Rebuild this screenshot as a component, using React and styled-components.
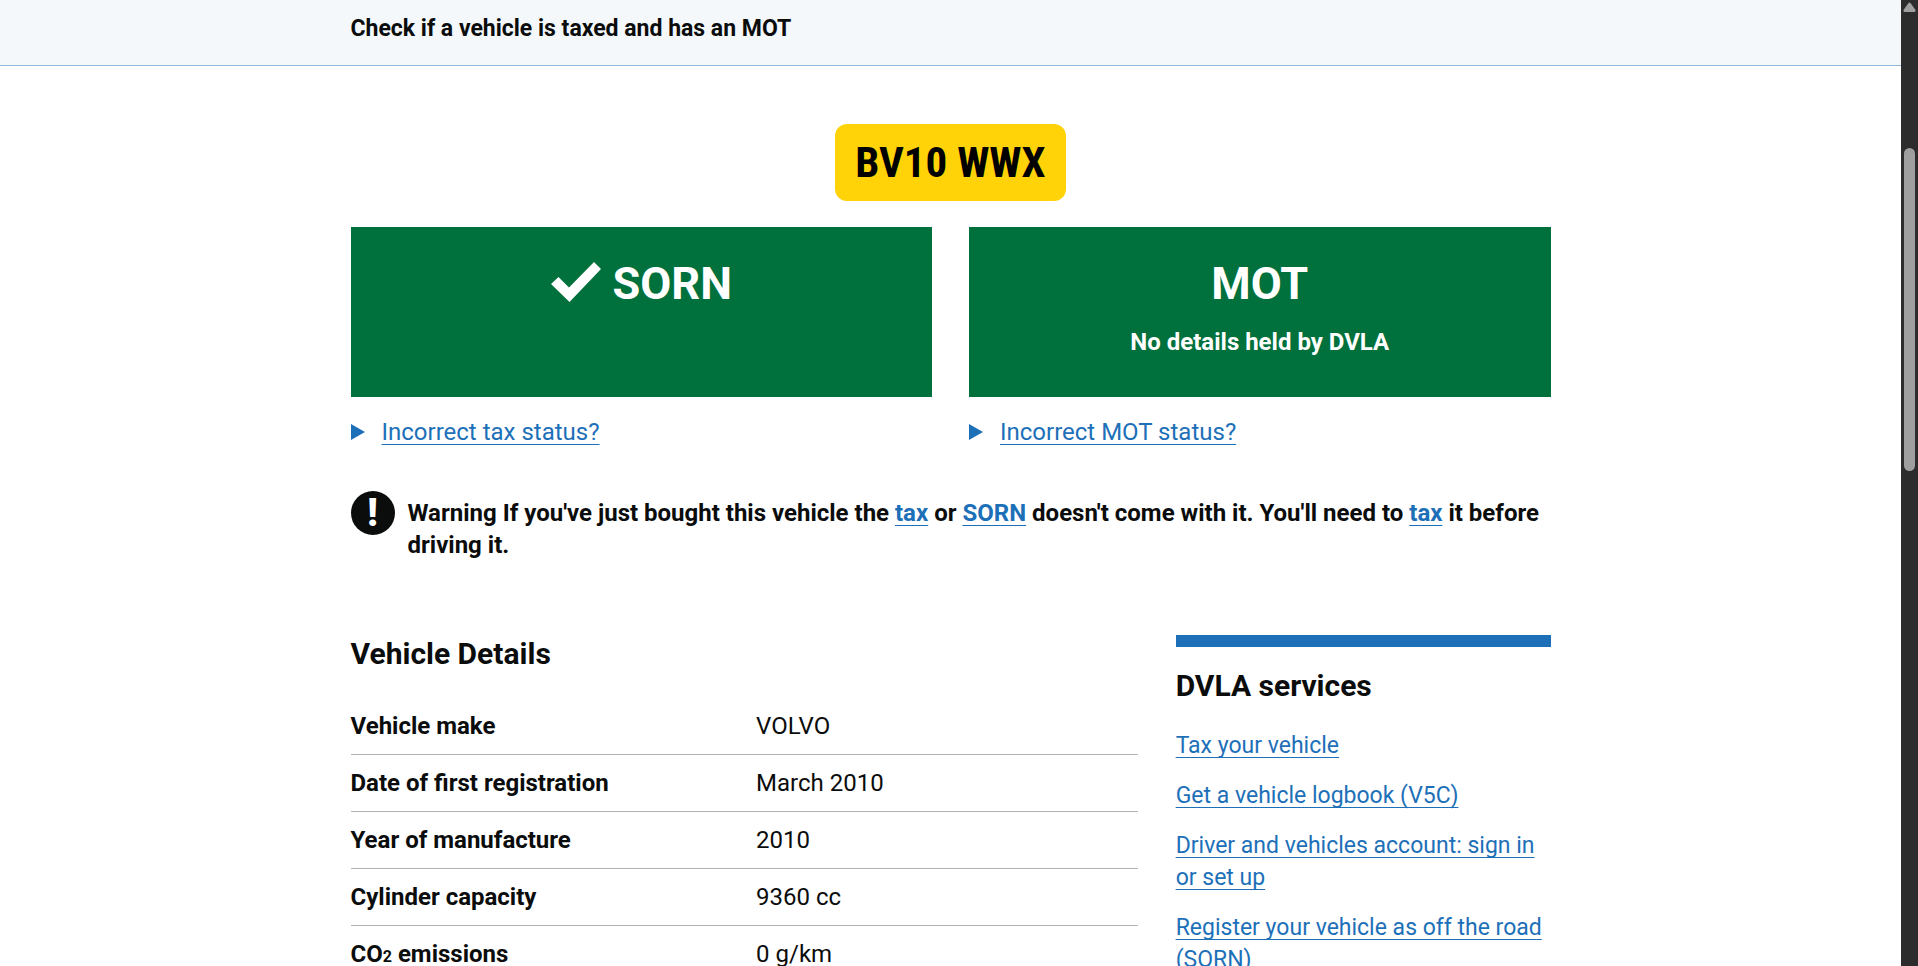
import React from 'react';
import styled, { createGlobalStyle, ThemeProvider } from 'styled-components';

const theme = {
  colors: {
    text: '#0b0c0c',
    link: '#1d70b8',
    green: '#00703c',
    border: '#b1b4b6',
    plate: '#ffd307',
    white: '#ffffff',
    banner: '#f4f8fb',
    bannerBorder: '#8eb8dc',
    track: '#2c2c2c',
    thumb: '#9f9f9f',
  },
  fontSize: {
    xs: '23px',
    s: '24px',
    m: '30px',
    l: '45px',
  },
};

const GlobalStyle = createGlobalStyle`
  * {
    box-sizing: border-box;
  }
  body {
    margin: 0;
    background: ${({ theme }) => theme.colors.white};
    color: ${({ theme }) => theme.colors.text};
    font-family: Roboto, Arial, sans-serif;
    font-size: ${({ theme }) => theme.fontSize.s};
    line-height: 32px;
  }
`;

const StyledShell = styled.div`
  height: 100vh;
  display: flex;
  overflow: hidden;
`;

const StyledPage = styled.div`
  flex: 1;
  min-width: 0;
  overflow: hidden;
`;

const StyledContainer = styled.div`
  max-width: 1200px;
  margin: 0 auto;
`;

const StyledBanner = styled.header`
  padding: 13px 0 20px;
  background: ${({ theme }) => theme.colors.banner};
  border-bottom: 1px solid ${({ theme }) => theme.colors.bannerBorder};
  font-size: ${({ theme }) => theme.fontSize.xs};
  font-weight: 700;
`;

const StyledPlate = styled.h1`
  width: fit-content;
  margin: 58px auto 26px;
  padding: 12px 20px 13px;
  border-radius: 12px;
  background: ${({ theme }) => theme.colors.plate};
  color: black;
  font-family: 'Roboto Condensed', 'Liberation Sans Narrow', Roboto, sans-serif;
  font-size: 43px;
  font-weight: 700;
  line-height: 52px;
`;

const StyledStatusRow = styled.div`
  display: grid;
  grid-template-columns: 1fr 1fr;
  gap: 37px;
`;

const StyledPanel = styled.div`
  min-height: 170px;
  padding: 29px 24px;
  background: ${({ theme }) => theme.colors.green};
  color: ${({ theme }) => theme.colors.white};
  font-weight: 700;
  text-align: center;

  h2 {
    display: flex;
    justify-content: center;
    align-items: center;
    gap: 12px;
    margin: 0 0 14px;
    font-size: ${({ theme }) => theme.fontSize.l};
    line-height: 56px;
  }
  p {
    margin: 0;
  }
`;

const StyledDetails = styled.details`
  margin-top: 19px;

  summary {
    display: flex;
    align-items: center;
    gap: 17px;
    list-style: none;
    color: ${({ theme }) => theme.colors.link};
    cursor: pointer;
  }
  span {
    text-decoration: underline;
    text-decoration-thickness: 1px;
    text-decoration-skip-ink: none;
    text-underline-offset: 4px;
  }
`;

const StyledLink = styled.a`
  color: ${({ theme }) => theme.colors.link};
  text-decoration: underline;
  text-decoration-thickness: 1px;
  text-decoration-skip-ink: none;
  text-underline-offset: 4px;
`;

const StyledWarning = styled.div`
  display: flex;
  gap: 13px;
  margin: 43px 0 74px;
  font-weight: 700;

  p {
    margin: 6px 0 0;
  }
`;

const StyledWarningIcon = styled.span`
  display: flex;
  flex: none;
  justify-content: center;
  align-items: center;
  width: 44px;
  height: 44px;
  border-radius: 50%;
  background: ${({ theme }) => theme.colors.text};
  color: ${({ theme }) => theme.colors.white};
  font-size: 38px;
  font-weight: 900;
`;

const StyledColumns = styled.div`
  display: grid;
  grid-template-columns: 21fr 10fr;
  gap: 38px;
`;

const StyledHeading = styled.h2`
  margin: 0;
  font-size: ${({ theme }) => theme.fontSize.m};
  font-weight: 700;
  line-height: 38px;
`;

const StyledTable = styled.table`
  width: 100%;
  margin-top: 25px;
  border-collapse: collapse;
  table-layout: fixed;

  th,
  td {
    padding: 12px 0;
    border-bottom: 1px solid ${({ theme }) => theme.colors.border};
    text-align: left;
  }
  td {
    padding-left: 12px;
  }
  sub {
    font-size: 16px;
    line-height: 1;
    vertical-align: baseline;
  }
`;

const StyledAside = styled.aside`
  border-top: 12px solid ${({ theme }) => theme.colors.link};
  padding-top: 20px;

  ul {
    margin: 25px 0 0;
    padding: 0;
    list-style: none;
    font-size: ${({ theme }) => theme.fontSize.xs};
  }
  li {
    margin-bottom: 18px;
  }
`;

const StyledScrollbar = styled.div`
  display: flex;
  flex: none;
  flex-direction: column;
  align-items: center;
  width: 17px;
  padding-top: 2px;
  background: ${({ theme }) => theme.colors.track};
`;

const StyledThumb = styled.div`
  width: 11px;
  height: 33.5%;
  margin-top: 136px;
  border-radius: 6px;
  background: ${({ theme }) => theme.colors.thumb};
`;

const vehicle = [
  { label: 'Vehicle make', value: 'VOLVO' },
  { label: 'Date of first registration', value: 'March 2010' },
  { label: 'Year of manufacture', value: '2010' },
  { label: 'Cylinder capacity', value: '9360 cc' },
  {
    label: (
      <>
        CO<sub>2</sub> emissions
      </>
    ),
    value: '0 g/km',
  },
];

const services = [
  'Tax your vehicle',
  'Get a vehicle logbook (V5C)',
  'Driver and vehicles account: sign in or set up',
  'Register your vehicle as off the road (SORN)',
];

const TickIcon = () => (
  <svg width="50" height="44" viewBox="0 0 50 44" fill="white" aria-hidden="true">
    <path d="M0 22 7.500 15 18 25.500 43 0 50 7 18.500 40Z" />
  </svg>
);

const StatusDetails = ({ children }) => (
  <StyledDetails>
    <summary>
      <svg width="14" height="16" viewBox="0 0 14 16" fill="currentColor" aria-hidden="true">
        <path d="M0 0 14 8 0 16Z" />
      </svg>
      <span>{children}</span>
    </summary>
  </StyledDetails>
);

const App = () => (
  <ThemeProvider theme={theme}>
    <GlobalStyle />
    <StyledShell>
      <StyledPage>
        <StyledBanner>
          <StyledContainer>Check if a vehicle is taxed and has an MOT</StyledContainer>
        </StyledBanner>
        <StyledContainer as="main">
          <StyledPlate>BV10 WWX</StyledPlate>
          <StyledStatusRow>
            <div>
              <StyledPanel>
                <h2>
                  <TickIcon />
                  SORN
                </h2>
              </StyledPanel>
              <StatusDetails>Incorrect tax status?</StatusDetails>
            </div>
            <div>
              <StyledPanel>
                <h2>MOT</h2>
                <p>No details held by DVLA</p>
              </StyledPanel>
              <StatusDetails>Incorrect MOT status?</StatusDetails>
            </div>
          </StyledStatusRow>
          <StyledWarning>
            <StyledWarningIcon aria-hidden="true">!</StyledWarningIcon>
            <p>
              Warning If you&apos;ve just bought this vehicle the <StyledLink href="#tax">tax</StyledLink> or{' '}
              <StyledLink href="#sorn">SORN</StyledLink> doesn&apos;t come with it. You&apos;ll need to{' '}
              <StyledLink href="#tax">tax</StyledLink> it before driving it.
            </p>
          </StyledWarning>
          <StyledColumns>
            <section>
              <StyledHeading>Vehicle Details</StyledHeading>
              <StyledTable>
                <tbody>
                  {vehicle.map(({ label, value }) => (
                    <tr key={value}>
                      <th scope="row">{label}</th>
                      <td>{value}</td>
                    </tr>
                  ))}
                </tbody>
              </StyledTable>
            </section>
            <StyledAside>
              <StyledHeading>DVLA services</StyledHeading>
              <ul>
                {services.map((name) => (
                  <li key={name}>
                    <StyledLink href="#services">{name}</StyledLink>
                  </li>
                ))}
              </ul>
            </StyledAside>
          </StyledColumns>
        </StyledContainer>
      </StyledPage>
      <StyledScrollbar aria-hidden="true">
        <svg width="13" height="10" viewBox="0 0 13 10" fill={theme.colors.thumb}>
          <path d="M5.5 1Q6.5 0 7.5 1L12.5 8Q13 10 11.5 10H1.5Q0 10 .5 8Z" />
        </svg>
        <StyledThumb />
      </StyledScrollbar>
    </StyledShell>
  </ThemeProvider>
);

export default App;
